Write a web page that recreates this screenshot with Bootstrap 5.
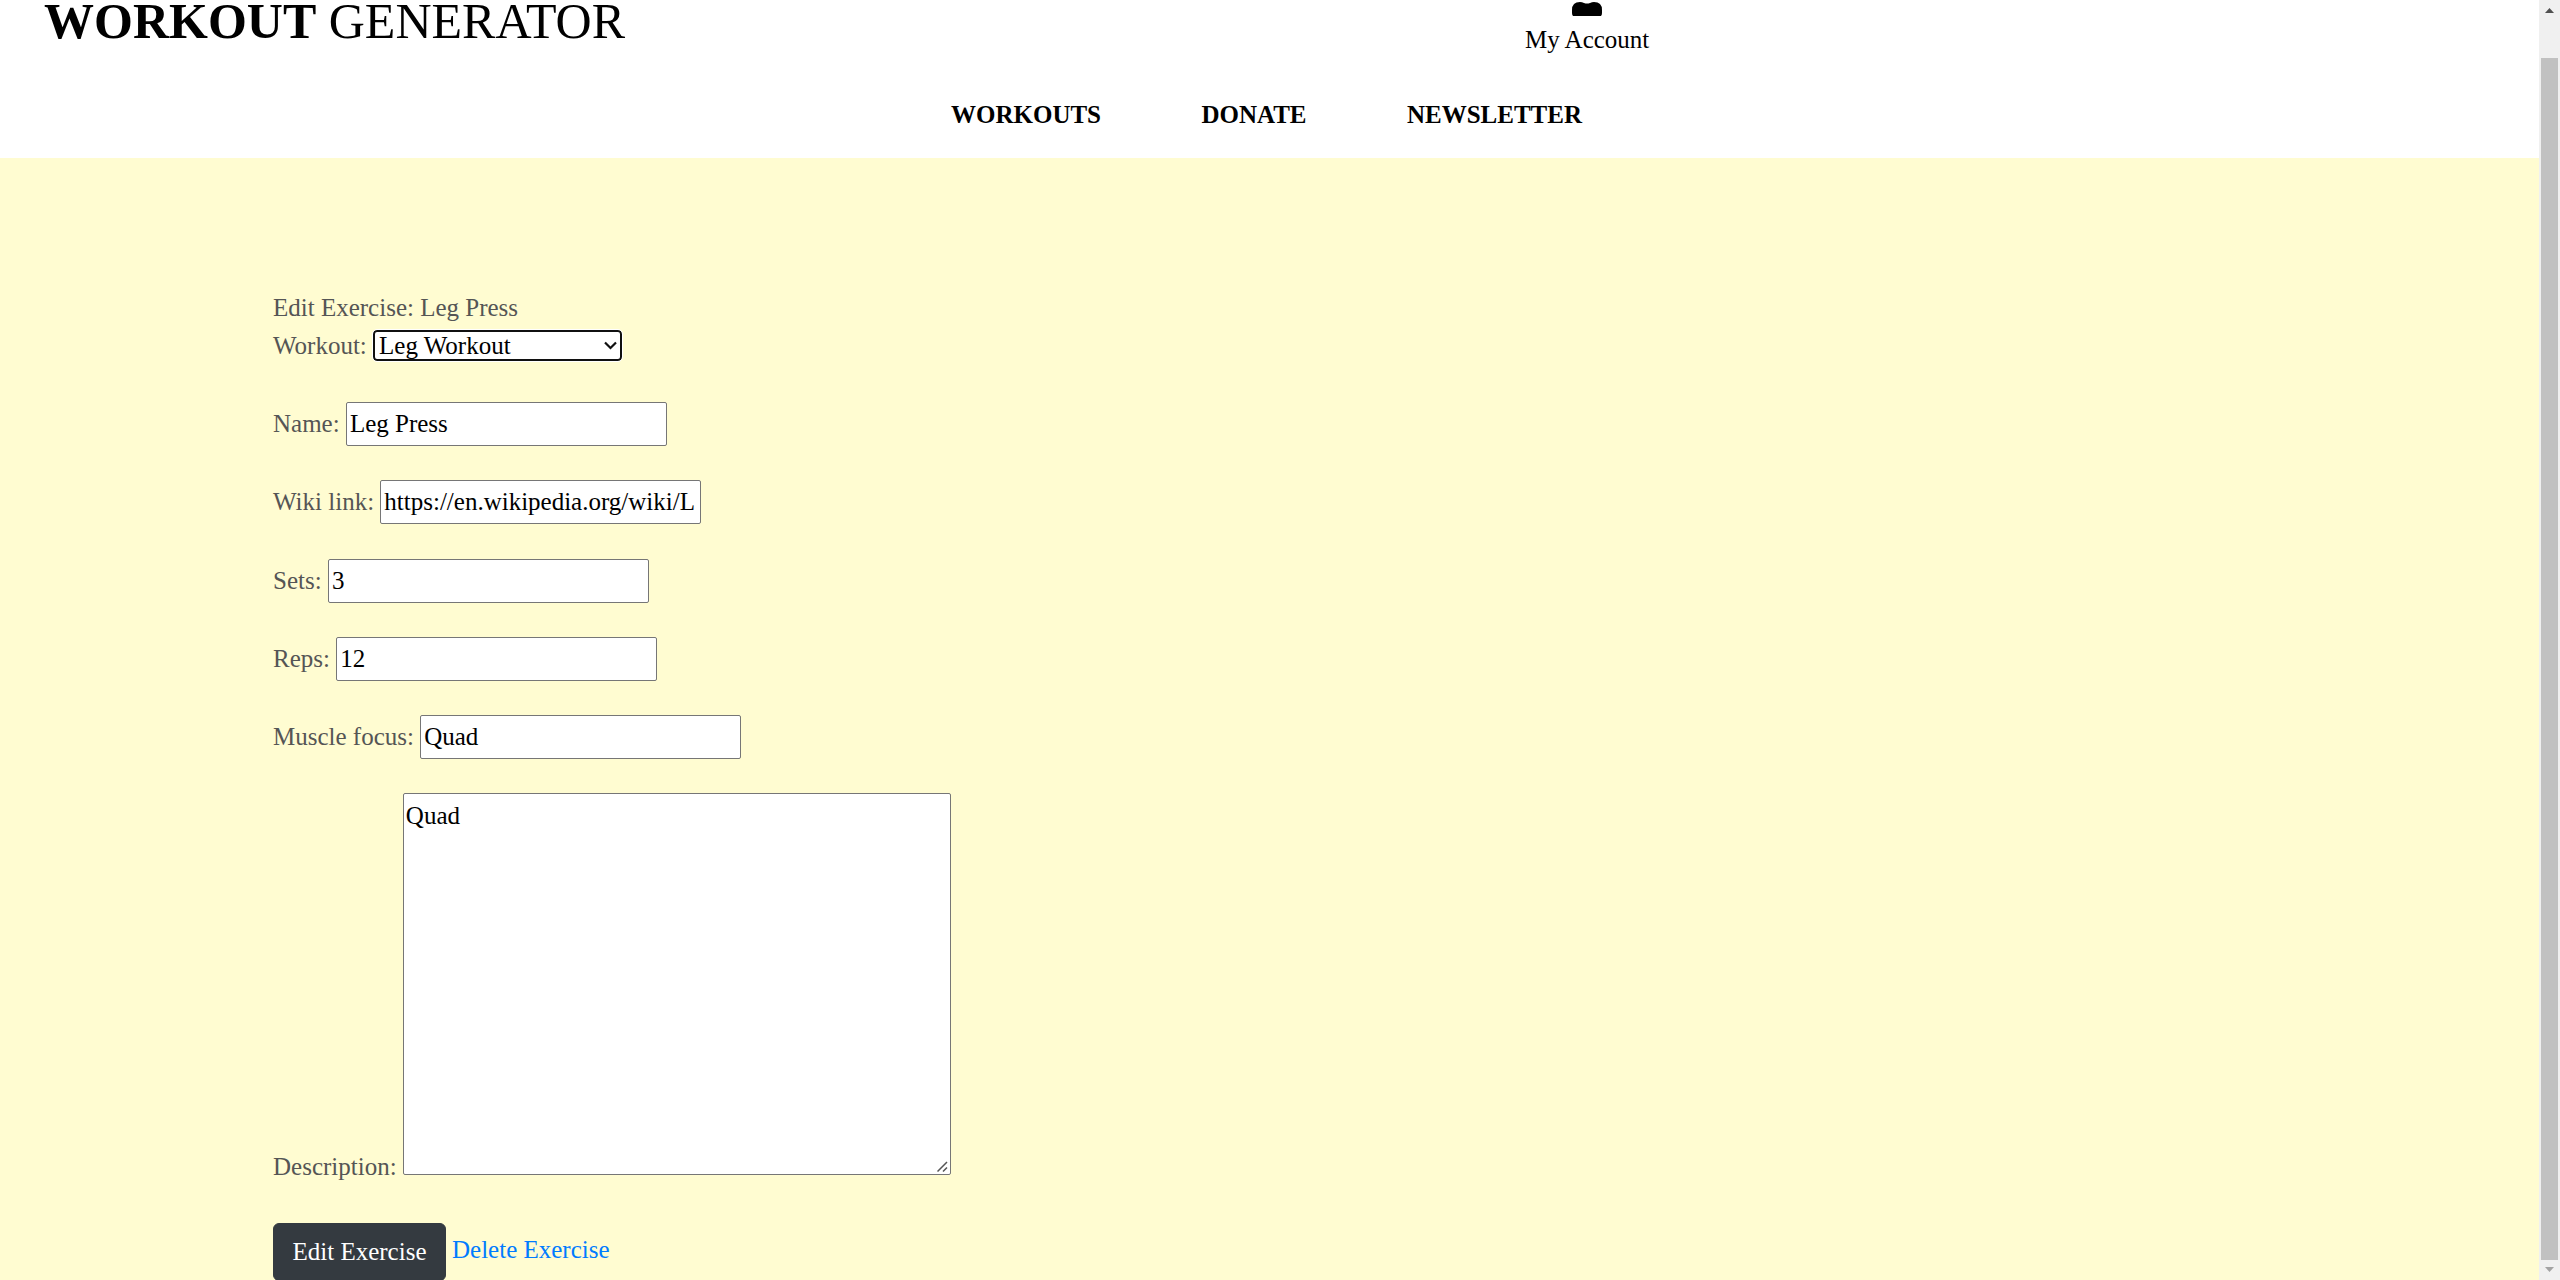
<!DOCTYPE html>
<html lang="en">
<head>
<meta charset="utf-8">
<title>Workout Generator</title>
<link href="https://cdn.jsdelivr.net/npm/bootstrap@5.3.0/dist/css/bootstrap.min.css" rel="stylesheet">
<style>
body { font-family: "Liberation Serif", serif; font-size: 25px; line-height: 38px; color: #555; background: #fffcd1; }
.site-head { height: 158px; color: #000; }
.head-top { height: 96px; padding-left: 44px; }
.brand-name { font-size: 50px; line-height: 42px; width: 1481px; color: #000; }
.account { line-height: 30px; color: #000; }
.account svg { width: 30px; height: 25px; }
.main-nav { gap: 100.4px; padding-left: 951px; line-height: 38px; }
.main-nav a { color: #000; }
.edit-form { padding: 131px 0 0 273px; }
.field { height: 44px; gap: 6.25px; margin-bottom: 34.3px; line-height: 44px; }
.field input { width: 321px; height: 44px; border: 1px solid #767676; border-radius: 2px; padding: 1px 3px; color: #000; background: #fff; }
.pick { height: 31px; margin: 3px 0 41px; line-height: 31px; }
.pick-box { position: relative; display: flex; }
.pick select { appearance: none; width: 249px; height: 31px; padding: 0 4px; border: 2px solid #101010; border-radius: 4px; outline: 1px solid #fff; line-height: 27px; color: #000; background: #fff; }
.pick-box svg { position: absolute; right: 5px; top: 11px; width: 13px; height: 9px; }
.field.notes { height: 382px; margin-bottom: 48px; }
.notes-box { position: relative; display: flex; }
.notes-box svg { position: absolute; right: 3px; bottom: 3px; width: 11px; height: 11px; }
.notes textarea { width: 548px; height: 382px; border: 1px solid #767676; border-radius: 2px; padding: 3px 2px 2px; line-height: 38px; color: #000; background: #fff; resize: none; }
.notes label { line-height: 38px; margin-bottom: -11px; }
.btn-edit { --bs-btn-color: #fff; --bs-btn-bg: #343a40; --bs-btn-border-color: #343a40; width: 173px; height: 58px; padding: 0 0 1px; font-size: 25px; border-radius: 6px; }
.link-del { color: #007bff; margin-left: 6px; }
.scroll-rail { width: 21px; background: #f0f0f0; padding: 8px 2px 8px; }
.scroll-thumb { width: 17px; background: #c1c1c1; margin-top: 45px; height: 1202px; }
</style>
<script src="https://cdn.jsdelivr.net/npm/bootstrap@5.3.0/dist/js/bootstrap.bundle.min.js"></script>
</head>
<body class="d-flex vh-100 overflow-hidden">
<div class="flex-grow-1 overflow-hidden">
  <header class="site-head bg-white overflow-hidden">
    <div class="head-top d-flex align-items-start">
      <a href="#" class="brand-name text-decoration-none"><b>WORKOUT</b> GENERATOR</a>
      <a href="#" class="account d-flex flex-column align-items-center text-decoration-none">
        <svg viewBox="0 0 30 25"><path d="M1 16Q0 15 0 13V10Q0 2 8 2Q10 2 12 3Q15 4 18 3Q20 2 22 2Q30 2 30 10V13Q30 15 29 16Z"/></svg>
        <span>My Account</span>
      </a>
    </div>
    <nav class="main-nav d-flex fw-bold">
      <a href="#" class="text-decoration-none">WORKOUTS</a>
      <a href="#" class="text-decoration-none">DONATE</a>
      <a href="#" class="text-decoration-none">NEWSLETTER</a>
    </nav>
  </header>
  <main class="edit-form">
    <div>Edit Exercise: Leg Press</div>
    <div class="field pick d-flex">
      <label for="workout">Workout:</label>
      <div class="pick-box">
        <select id="workout"><option>Leg Workout</option></select>
        <svg viewBox="0 0 13 9" fill="none" stroke="#101010" stroke-width="2.2"><path d="M1 1.5L6.5 7L12 1.5"/></svg>
      </div>
    </div>
    <div class="field d-flex"><label for="name">Name:</label><input id="name" value="Leg Press"></div>
    <div class="field d-flex"><label for="wiki">Wiki link:</label><input id="wiki" value="https://en.wikipedia.org/wiki/L"></div>
    <div class="field d-flex"><label for="sets">Sets:</label><input id="sets" value="3"></div>
    <div class="field d-flex"><label for="reps">Reps:</label><input id="reps" value="12"></div>
    <div class="field d-flex"><label for="focus">Muscle focus:</label><input id="focus" value="Quad"></div>
    <div class="field notes d-flex align-items-end">
      <label for="desc">Description:</label>
      <div class="notes-box">
        <textarea id="desc">Quad</textarea>
        <svg viewBox="0 0 11 11" fill="none" stroke="#555" stroke-width="1.5"><path d="M0.500 10.500L10 1M6 10.500L10 6.500"/></svg>
      </div>
    </div>
    <div class="d-flex align-items-start">
      <button class="btn btn-edit">Edit Exercise</button>
      <a href="#" class="link-del text-decoration-none pt-2">Delete Exercise</a>
    </div>
  </main>
</div>
<div class="scroll-rail flex-shrink-0 d-flex flex-column align-items-center">
  <svg width="9" height="5" viewBox="0 0 9 5"><path d="M4.500 0L9 5H0Z" fill="#505050"/></svg>
  <div class="scroll-thumb flex-shrink-0"></div>
  <svg class="mt-auto" width="9" height="5" viewBox="0 0 9 5"><path d="M0 0H9L4.500 5Z" fill="#a3a3a3"/></svg>
</div>
</body>
</html>
